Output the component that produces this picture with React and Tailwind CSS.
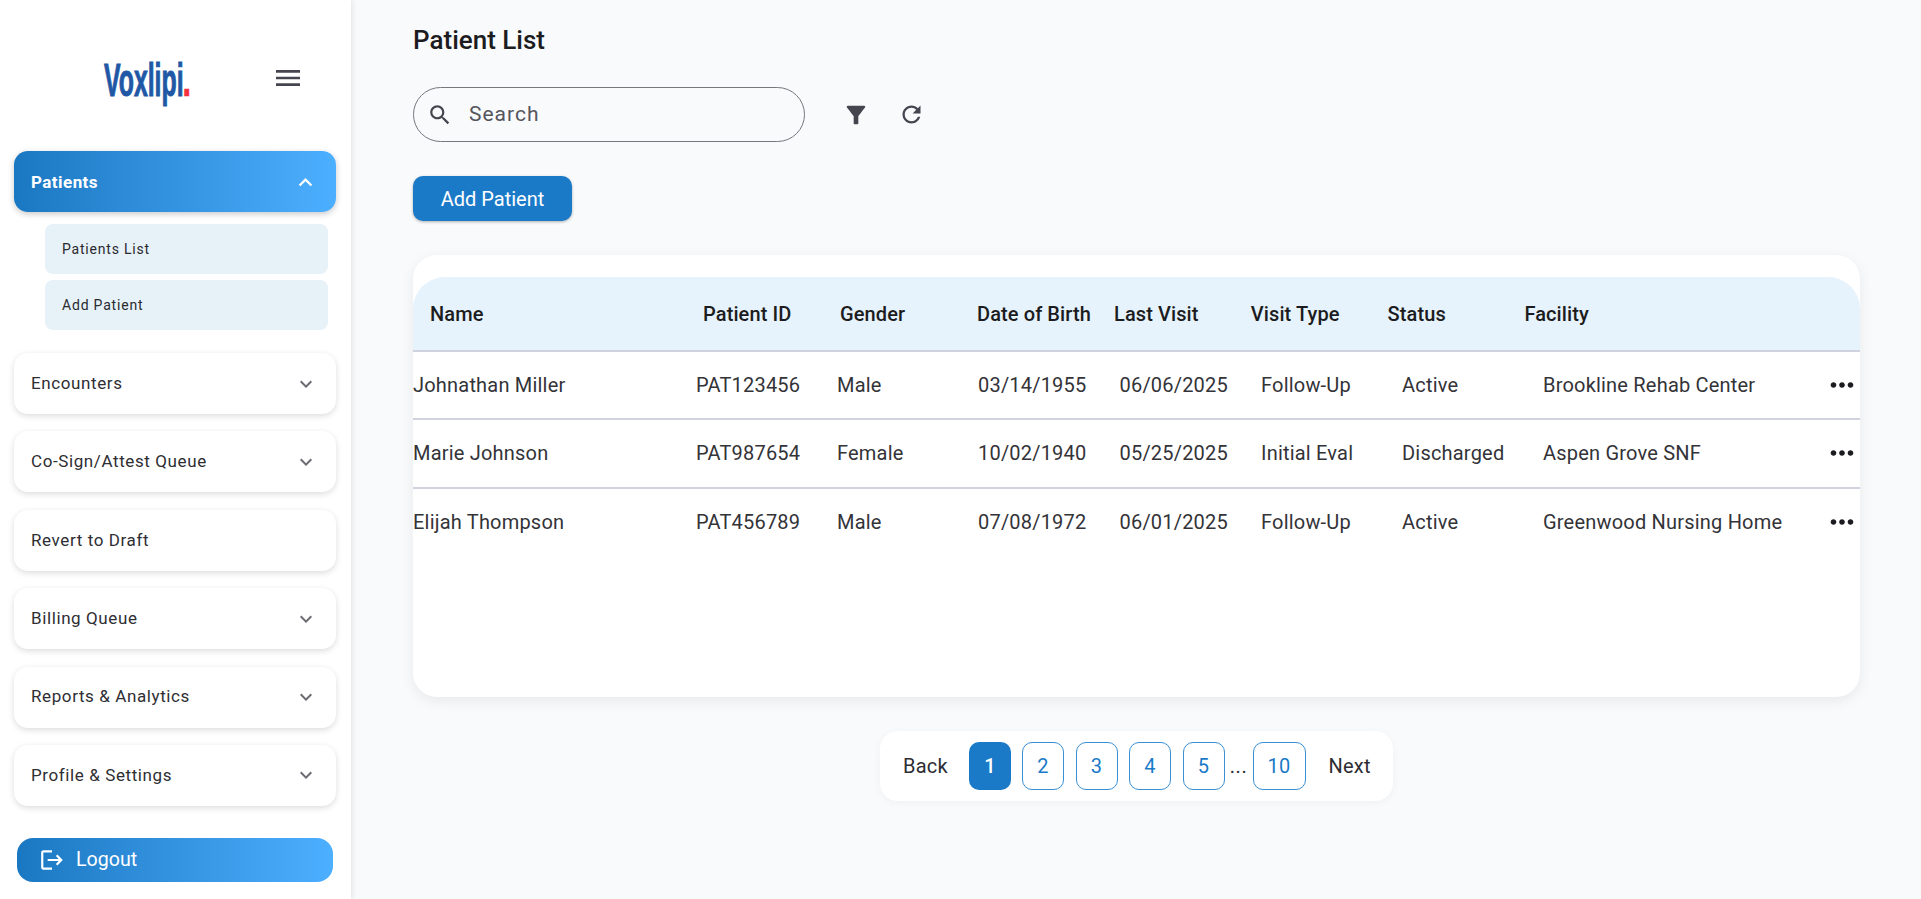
import { useState } from "react";

const icons = {
  search: "M15.5 14h-.79l-.28-.27C15.41 12.59 16 11.11 16 9.5 16 5.91 13.09 3 9.5 3S3 5.91 3 9.5 5.91 16 9.5 16c1.61 0 3.09-.59 4.23-1.57l.27.28v.79l5 4.99L20.49 19l-4.99-5zm-6 0C7.01 14 5 11.99 5 9.5S7.01 5 9.5 5 14 7.01 14 9.5 11.99 14 9.5 14z",
  filter: "M4.25 5.61C6.27 8.2 10 13 10 13v6c0 .55.45 1 1 1h2c.55 0 1-.45 1-1v-6s3.72-4.8 5.74-7.39c.51-.66.04-1.61-.79-1.61H5.04c-.83 0-1.3.95-.79 1.61z",
  refresh: "M17.65 6.35C16.2 4.9 14.21 4 12 4c-4.42 0-7.99 3.58-7.99 8s3.57 8 7.99 8c3.73 0 6.84-2.55 7.73-6h-2.08c-.82 2.33-3.04 4-5.65 4-3.31 0-6-2.69-6-6s2.69-6 6-6c1.66 0 3.14.69 4.22 1.78L13 11h7V4l-2.35 2.35z",
  more: "M16.59 8.59 12 13.17 7.41 8.59 6 10l6 6 6-6z",
  less: "m12 8-6 6 1.41 1.41L12 10.83l4.59 4.58L18 14z",
  menu: "M3 18h18v-2H3v2zm0-5h18v-2H3v2zm0-7v2h18V6H3z",
  logout: "m17 7-1.41 1.41L18.17 11H8v2h10.17l-2.58 2.58L17 17l5-5zM4 5h8V3H4c-1.1 0-2 .9-2 2v14c0 1.1.9 2 2 2h8v-2H4V5z",
  dots: "M6 10c-1.1 0-2 .9-2 2s.9 2 2 2 2-.9 2-2-.9-2-2-2zm12 0c-1.1 0-2 .9-2 2s.9 2 2 2 2-.9 2-2-.9-2-2-2zm-6 0c-1.1 0-2 .9-2 2s.9 2 2 2 2-.9 2-2-.9-2-2-2z",
};

function Icon({ name, className }) {
  return (
    <svg viewBox="0 0 24 24" fill="currentColor" className={className}>
      <path d={icons[name]} />
    </svg>
  );
}

const navItems = [
  { label: "Encounters", arrow: true },
  { label: "Co-Sign/Attest Queue", arrow: true },
  { label: "Revert to Draft", arrow: false },
  { label: "Billing Queue", arrow: true },
  { label: "Reports & Analytics", arrow: true },
  { label: "Profile & Settings", arrow: true },
];

const headers = ["Name", "Patient ID", "Gender", "Date of Birth", "Last Visit", "Visit Type", "Status", "Facility"];

const patients = [
  ["Johnathan Miller", "PAT123456", "Male", "03/14/1955", "06/06/2025", "Follow-Up", "Active", "Brookline Rehab Center"],
  ["Marie Johnson", "PAT987654", "Female", "10/02/1940", "05/25/2025", "Initial Eval", "Discharged", "Aspen Grove SNF"],
  ["Elijah Thompson", "PAT456789", "Male", "07/08/1972", "06/01/2025", "Follow-Up", "Active", "Greenwood Nursing Home"],
];

function Sidebar() {
  return (
    <aside className="flex h-[899px] w-[351px] shrink-0 flex-col bg-white pl-[14px] shadow-[2px_0_5px_rgba(0,0,0,0.08)]">
      <div className="flex h-[151px] items-start">
        <div className="mt-[54px] ml-[90px] flex h-[52px] w-[90px] items-start overflow-visible">
          <span className="origin-left scale-x-[0.54] text-[46px] leading-[52px] font-bold whitespace-nowrap text-[#2158a5] [-webkit-text-stroke:1px_#2158a5] [font-family:'Liberation_Sans',sans-serif]">
            Voxlipi<span className="-ml-[2px] inline-block origin-left scale-x-[1.3] text-[#f5333f] [-webkit-text-stroke:0.5px_#f5333f]">.</span>
          </span>
        </div>
        <Icon name="menu" className="mt-[62px] ml-[78px] h-[32px] w-[32px] text-[#45454f]" />
      </div>

      <div className="flex h-[61px] w-[322px] items-center justify-between rounded-[14px] bg-gradient-to-r from-[#1a78c2] to-[#4cafff] pt-[2px] pr-[17px] pl-[17px] text-[17px] font-bold tracking-[0.45px] text-white shadow-[0_2px_6px_rgba(0,0,0,0.22)]">
        Patients
        <Icon name="less" className="h-[27px] w-[27px]" />
      </div>

      <div className="mt-[12px] ml-[31px] flex w-[283px] flex-col gap-[6px]">
        {["Patients List", "Add Patient"].map((s) => (
          <div key={s} className="flex h-[50px] items-center rounded-[8px] bg-[#e7f1f8] pl-[17px] text-[14px] tracking-[0.8px] text-[#2a2a2e]">
            {s}
          </div>
        ))}
      </div>

      <div className="mt-[23px] flex w-[322px] flex-col gap-[17.4px]">
        {navItems.map((item) => (
          <div key={item.label} className="flex h-[61px] items-center justify-between rounded-[14px] bg-white pr-[18px] pl-[17px] text-[17px] font-[450] tracking-[0.6px] text-[#2e2e33] shadow-[0_2px_6px_rgba(0,0,0,0.14)]">
            {item.label}
            {item.arrow && <Icon name="more" className="h-[24px] w-[24px] text-[#6b6b72]" />}
          </div>
        ))}
      </div>

      <div className="mt-[32px] ml-[3px] flex h-[44px] w-[316px] items-center gap-[11px] rounded-[16px] bg-gradient-to-r from-[#1a78c2] to-[#4cafff] pl-[22px] text-[19.6px] text-white">
        <Icon name="logout" className="h-[26px] w-[26px]" />
        Logout
      </div>
    </aside>
  );
}

function PatientTable() {
  return (
    <div className="mt-[34px] h-[442px] rounded-[24px] bg-white pt-[22px] shadow-[0_4px_14px_rgba(0,0,0,0.07)]">
      <div className="grid h-[75px] grid-cols-[273px_137px_137px_137px_136.8px_136.8px_136.8px_1fr] items-center rounded-t-[32px] border-b-2 border-[#d0d2e0] bg-[#e6f3fc] pl-[17px] text-[20px] font-medium tracking-[0.1px] text-[#1c1c20]">
        {headers.map((h) => (
          <div key={h} className="whitespace-nowrap">{h}</div>
        ))}
      </div>
      {patients.map((row, i) => (
        <div key={row[0]} className={`grid h-[68.3px] grid-cols-[283px_141px_141px_141.5px_141.5px_141px_141px_1fr_auto] items-center text-[20px] tracking-[0.2px] text-[#333338] ${i < 2 ? "border-b-2 border-[#d0d2e0]" : "pb-[2px]"}`}>
          {row.map((cell) => (
            <div key={cell} className="whitespace-nowrap">{cell}</div>
          ))}
          <Icon name="dots" className="h-[34px] w-[34px] -translate-x-[1px] text-[#1c1c20]" />
        </div>
      ))}
    </div>
  );
}

function Pagination() {
  const pageBtn = "flex h-[48px] items-center justify-center rounded-[10px] text-[20px]";
  return (
    <div className="mx-auto mt-[34px] flex h-[70px] w-[513px] items-center rounded-[18px] bg-white pl-[23px] text-[20px] tracking-[0.2px] text-[#2d2d33] shadow-[0_2px_10px_rgba(0,0,0,0.04)]">
      <span className="w-[66px]">Back</span>
      <div className={`${pageBtn} w-[42px] bg-[#1a7ac8] font-medium text-white`}>1</div>
      <div className="ml-[11px] flex gap-[11.5px]">
        {[2, 3, 4, 5].map((n) => (
          <div key={n} className={`${pageBtn} w-[42px] border-[1.5px] border-[#3a8fd2] text-[#1a7ac8]`}>{n}</div>
        ))}
      </div>
      <span className="flex w-[28px] justify-center tracking-[0.5px]">...</span>
      <div className={`${pageBtn} w-[53px] border-[1.5px] border-[#3a8fd2] text-[#1a7ac8]`}>10</div>
      <span className="ml-[23px]">Next</span>
    </div>
  );
}

export default function App() {
  const [search, setSearch] = useState("");

  return (
    <div className="flex h-[899px] overflow-hidden bg-[#f9fafc] [font-family:Roboto,sans-serif]">
      <Sidebar />
      <main className="flex-1 pl-[62px]">
        <div className="w-[1447px]">
          <h1 className="pt-[22px] text-[26px] leading-[36px] font-medium text-[#1c1c20]">Patient List</h1>

          <div className="mt-[29px] flex items-center">
            <label className="flex h-[55px] w-[392px] items-center rounded-full border border-[#77777c] pl-[13px]">
              <Icon name="search" className="h-[26px] w-[26px] shrink-0 text-[#45454f]" />
              <input
                value={search}
                onChange={(e) => setSearch(e.target.value)}
                placeholder="Search"
                className="ml-[16px] w-full bg-transparent pt-[1px] text-[21px] tracking-[1px] outline-none placeholder:text-[#55555c]"
              />
            </label>
            <Icon name="filter" className="ml-[37px] h-[28px] w-[28px] text-[#45454f]" />
            <Icon name="refresh" className="ml-[28px] h-[27px] w-[27px] text-[#45454f]" />
          </div>

          <button className="mt-[34px] flex h-[45px] w-[159px] items-center justify-center rounded-[10px] bg-[#1a7ac8] pt-[1px] text-[20px] text-white shadow-[0_1px_3px_rgba(0,0,0,0.3)]">
            Add Patient
          </button>

          <PatientTable />
          <Pagination />
        </div>
      </main>
    </div>
  );
}
